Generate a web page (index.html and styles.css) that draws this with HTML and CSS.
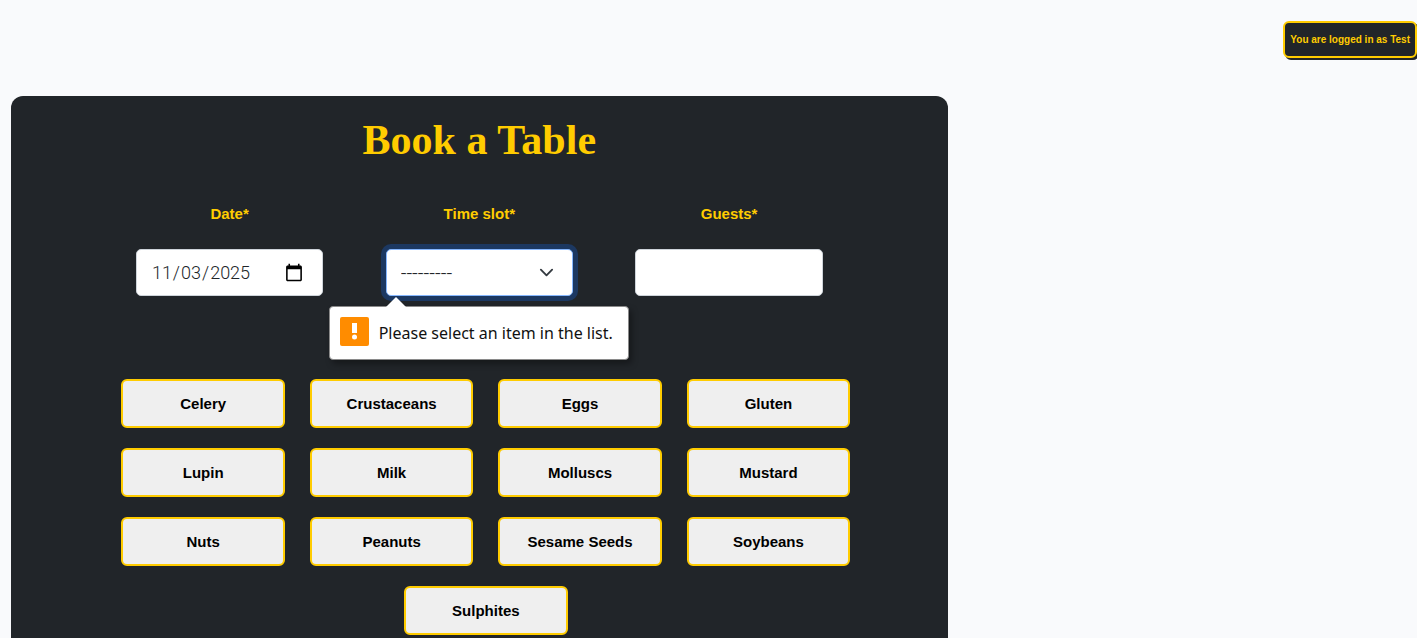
FILE: index.html
```html
<!DOCTYPE html>
<html lang="en-US">
<head>
<meta charset="utf-8">
<meta name="viewport" content="width=device-width, initial-scale=1">
<title>Book a Table</title>
<link rel="stylesheet" href="styles.css">
</head>
<body>
<header class="topbar">
  <p class="login-status">You are logged in as Test</p>
</header>
<main class="booking">
  <h1 class="booking-title">Book a Table</h1>
  <form class="booking-form">
    <div class="fields">
      <div class="field">
        <label class="field-label" for="date">Date*</label>
        <input class="control control-date" type="date" id="date" value="2025-11-03">
      </div>
      <div class="field">
        <label class="field-label" for="slot">Time slot*</label>
        <div class="select-wrap">
          <select class="control control-select" id="slot" aria-describedby="slot-error">
            <option value="">---------</option>
          </select>
          <svg class="chevron" viewBox="0 0 16 16" aria-hidden="true"><path d="m2 5 6 6 6-6" fill="none" stroke="#343a40" stroke-width="2" stroke-linecap="round" stroke-linejoin="round"/></svg>
          <div class="tooltip" id="slot-error" role="alert">
            <svg class="tooltip-arrow" viewBox="0 0 20 10" aria-hidden="true"><path d="M0 10 10 0l10 10z" fill="#fff"/></svg>
            <svg class="tooltip-icon" viewBox="0 0 29 29" aria-hidden="true"><rect width="29" height="29" rx="2" fill="#ff8c00"/><path d="M12 6h5v10h-5z" fill="#fff"/><circle cx="14.5" cy="20" r="2.5" fill="#fff"/></svg>
            <span class="tooltip-text">Please select an item in the list.</span>
          </div>
        </div>
      </div>
      <div class="field">
        <label class="field-label" for="guests">Guests*</label>
        <input class="control" type="text" inputmode="numeric" id="guests">
      </div>
    </div>
    <div class="allergens">
      <button class="allergen" type="button">Celery</button>
      <button class="allergen" type="button">Crustaceans</button>
      <button class="allergen" type="button">Eggs</button>
      <button class="allergen" type="button">Gluten</button>
      <button class="allergen" type="button">Lupin</button>
      <button class="allergen" type="button">Milk</button>
      <button class="allergen" type="button">Molluscs</button>
      <button class="allergen" type="button">Mustard</button>
      <button class="allergen" type="button">Nuts</button>
      <button class="allergen" type="button">Peanuts</button>
      <button class="allergen" type="button">Sesame Seeds</button>
      <button class="allergen" type="button">Soybeans</button>
      <button class="allergen" type="button">Sulphites</button>
    </div>
  </form>
</main>
</body>
</html>
```
FILE: styles.css
```css
:root {
  --gold: #ffcc00;
  --dark: #212529;
  --hand: "Liberation Sans", sans-serif;
}

* {
  box-sizing: border-box;
}

body {
  margin: 0;
  height: 100vh;
  overflow: hidden;
  background: #f9fafc;
  font-family: Roboto, sans-serif;
}

.topbar {
  display: flex;
  justify-content: flex-end;
  padding: 21px 0 38px;
}

.login-status {
  margin: 0;
  padding: 4px 5px;
  border: 2px solid var(--gold);
  border-radius: 6px;
  background: var(--dark);
  box-shadow: 2px 2px 0 var(--dark);
  color: var(--gold);
  font: bold 10px/25px var(--hand);
  white-space: nowrap;
}

.booking {
  width: calc(66.6667% - 8px);
  margin-left: 11px;
  padding: 20px 0 24px;
  border-radius: 12px;
  background: var(--dark);
}

.booking-title {
  margin: 0 0 32px;
  color: var(--gold);
  font: bold 42px/48px "Liberation Serif", serif;
  text-align: center;
}

.fields {
  display: grid;
  grid-template-columns: repeat(3, 1fr);
  width: 80%;
  margin: 0 auto 83px;
}

.field {
  display: flex;
  flex-direction: column;
  align-items: center;
  gap: 17px;
}

.field-label {
  color: var(--gold);
  font: bold 15px/36px var(--hand);
}

.control {
  width: 75%;
  height: 47px;
  padding: 0 18px 0 14px;
  border: 1px solid #ced4da;
  border-radius: 5px;
  background: #fff;
  color: #212529;
  font: 300 18px/28px Roboto, sans-serif;
}

.control-date::-webkit-calendar-picker-indicator {
  width: 20px;
  height: 20px;
  padding: 0;
}

.control-date::-webkit-datetime-edit {
  padding: 0;
}

.select-wrap {
  position: relative;
  width: 75%;
}

.control-select {
  display: block;
  width: 100%;
  appearance: none;
  border-color: #86b7fe;
  box-shadow: 0 0 0 5px #1c3861;
  font-size: 20px;
}

.chevron {
  position: absolute;
  top: 16px;
  right: 19px;
  width: 15px;
  height: 15px;
}

.tooltip {
  position: absolute;
  z-index: 1;
  top: 57px;
  left: -57px;
  display: flex;
  align-items: center;
  gap: 10px;
  padding: 10px 15px 10px 10px;
  border: 1px solid #8a8a8a;
  border-radius: 4px;
  background: #fff;
  box-shadow: 3px 4px 6px rgba(0, 0, 0, 0.35);
  color: #111;
  font: 16px/32px "Noto Sans", sans-serif;
  white-space: nowrap;
}

.tooltip-arrow {
  position: absolute;
  top: -10px;
  left: 56px;
  width: 20px;
  height: 10px;
}

.tooltip-icon {
  flex: none;
  align-self: flex-start;
  width: 29px;
  height: 29px;
}

.allergens {
  display: flex;
  flex-wrap: wrap;
  justify-content: center;
  gap: 20px 25px;
  width: 81%;
  margin: 0 auto;
  padding-left: 13px;
}

.allergen {
  flex: 0 0 calc(25% - 23px);
  height: 49px;
  padding: 0;
  border: 2px solid var(--gold);
  border-radius: 6px;
  background: #efefef;
  color: #000;
  font: bold 15px/28px var(--hand);
}
```
